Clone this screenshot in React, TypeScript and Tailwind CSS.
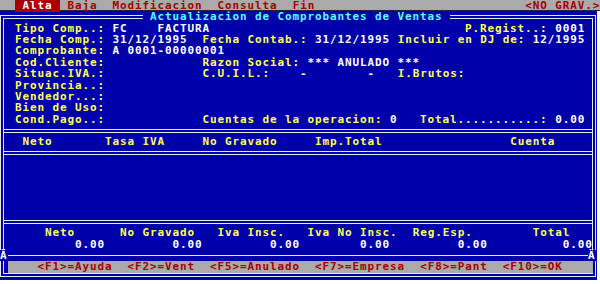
import React from 'react';

type K = 'y' | 'w' | 'c' | 'r' | 'a';
type Seg = [number, string, K];

const COLOR: Record<K, string> = {
  y: 'text-[#ffff55]',
  w: 'text-[#ffffff]',
  c: 'text-[#55ffff]',
  r: 'text-[#aa0000]',
  a: 'text-[#ffffff] bg-[#aa0000]',
};

function build(segs: Seg[], start: number) {
  let cur = start;
  const out: React.ReactNode[] = [];
  segs.forEach(([c, t, k], i) => {
    if (c > cur) out.push(<span key={'s' + i}>{' '.repeat(c - cur)}</span>);
    out.push(
      <span key={'t' + i} className={COLOR[k]}>
        {t}
      </span>
    );
    cur = c + t.length;
  });
  return out;
}

function Line({ segs }: { segs: Seg[] }) {
  return <div className="h-[11.36px] whitespace-pre pl-[3.5px]">{build(segs, 1)}</div>;
}

function Sep() {
  return (
    <div className="h-[11.36px] flex items-center">
      <div className="h-[4px] w-full border-y border-[#e8e8e8]" />
    </div>
  );
}

const top: Seg[][] = [
  [[2, 'Tipo Comp..:', 'y'], [15, 'FC    FACTURA', 'w'], [62, 'P.Regist..:', 'y'], [74, '0001', 'w']],
  [[2, 'Fecha Comp.:', 'y'], [15, '31/12/1995', 'w'], [27, 'Fecha Contab.:', 'y'], [42, '31/12/1995', 'w'], [53, 'Incluir en DJ de:', 'y'], [71, '12/1995', 'w']],
  [[2, 'Comprobante:', 'y'], [15, 'A 0001-00000001', 'w']],
  [[2, 'Cod.Cliente:', 'y'], [27, 'Razon Social:', 'y'], [41, '*** ANULADO ***', 'w']],
  [[2, 'Situac.IVA.:', 'y'], [27, 'C.U.I.L.:', 'y'], [40, '-', 'w'], [49, '-', 'w'], [53, 'I.Brutos:', 'y']],
  [[2, 'Provincia..:', 'y']],
  [[2, 'Vendedor...:', 'y']],
  [[2, 'Bien de Uso:', 'y']],
  [[2, 'Cond.Pago..:', 'y'], [27, 'Cuentas de la operacion:', 'y'], [52, '0', 'w'], [56, 'Total...........:', 'y'], [74, '0.00', 'w']],
];

const header: Seg[] = [[3, 'Neto', 'y'], [14, 'Tasa IVA', 'y'], [27, 'No Gravado', 'y'], [42, 'Imp.Total', 'y'], [68, 'Cuenta', 'y']];

const totLabels: Seg[] = [[6, 'Neto', 'y'], [16, 'No Gravado', 'y'], [29, 'Iva Insc.', 'y'], [41, 'Iva No Insc.', 'y'], [55, 'Reg.Esp.', 'y'], [71, 'Total', 'y']];
const totValues: Seg[] = [[10, '0.00', 'w'], [23, '0.00', 'w'], [36, '0.00', 'w'], [48, '0.00', 'w'], [61, '0.00', 'w'], [75, '0.00', 'w']];

const fkeys: Seg[] = [[5, '<F1>=Ayuda', 'r'], [17, '<F2>=Vent', 'r'], [28, '<F5>=Anulado', 'r'], [42, '<F7>=Empresa', 'r'], [56, '<F8>=Pant', 'r'], [67, '<F10>=OK', 'r']];

const menu: Seg[] = [[2, ' Alta ', 'a'], [9, 'Baja', 'r'], [15, 'Modificacion', 'r'], [29, 'Consulta', 'r'], [39, 'Fin', 'r'], [70, '<NO GRAV.>', 'r']];

export default function App() {
  return (
    <div className="w-[600px] h-[284px] bg-white overflow-hidden font-['DejaVu_Sans_Mono',monospace] font-bold text-[11px] tracking-[0.878px] leading-[11.36px]">
      <div className="h-[11.36px] w-[600px] bg-[#aaaaaa] border-b border-[#202040] whitespace-pre">{build(menu, 0)}</div>
      <div className="w-[597px] h-[268.64px] bg-[#0000aa] pt-[3.64px]">
        <div className="w-[595.5px] border-4 border-double border-[#e8e8e8]">
          <div className="h-[11.36px] -mt-[7.64px] pl-[138.5px] whitespace-pre">
            <span className="inline-block h-[11.36px] align-top bg-[#0000aa] text-[#55ffff]"> Actualizacion de Comprobantes de Ventas </span>
          </div>
          {top.map((s, i) => (
            <Line key={i} segs={s} />
          ))}
          <Sep />
          <Line segs={header} />
          <Sep />
          <div className="h-[56.8px]" />
          <Sep />
          <Line segs={totLabels} />
          <Line segs={totValues} />
          <div className="h-[11.36px] -mx-[4px] flex items-center text-white">
            <span className="w-[7.5px] h-[11.36px] bg-[#0000aa] whitespace-pre">Ä</span>
            <div className="flex-1 h-px bg-[#e8e8e8]" />
            <span className="w-[7.5px] h-[11.36px] bg-[#0000aa] whitespace-pre">Ä</span>
          </div>
          <div className="h-[11.36px] ml-[3.5px] w-[585px] bg-[#aaaaaa] whitespace-pre">{build(fkeys, 1)}</div>
        </div>
      </div>
    </div>
  );
}
